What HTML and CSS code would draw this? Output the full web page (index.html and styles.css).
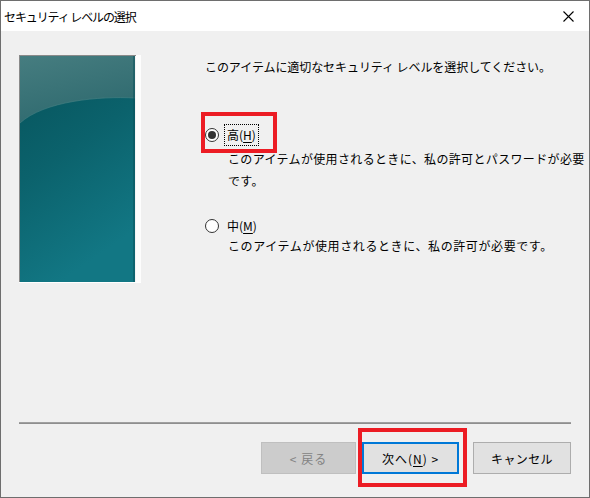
FILE: index.html
```html
<!DOCTYPE html>
<html lang="ja">
<head>
  <meta charset="UTF-8" />
  <title>セキュリティ レベルの選択</title>
  <link rel="stylesheet" href="styles.css">
</head>
<body>
  <div class="window">
    <div class="titlebar">
      <span class="title">セキュリティ レベルの選択</span>
      <svg class="close" width="11" height="11" viewBox="0 0 11 11">
        <path d="M0.5 0.5 L10.5 10.5 M10.5 0.5 L0.5 10.5" stroke="#000" stroke-width="1.1" fill="none"/>
      </svg>
    </div>

    <div class="main">
      <div class="panel">
        <svg width="122" height="228" viewBox="0 0 122 228">
          <defs>
            <linearGradient id="deep" x1="0" y1="0" x2="0.35" y2="1">
              <stop offset="0" stop-color="#06525a"/>
              <stop offset="0.5" stop-color="#0b626c"/>
              <stop offset="1" stop-color="#127784"/>
            </linearGradient>
            <linearGradient id="gloss" x1="0" y1="0" x2="0.4" y2="1">
              <stop offset="0" stop-color="#467d80"/>
              <stop offset="1" stop-color="#2f6a6f"/>
            </linearGradient>
          </defs>
          <rect x="0" y="0" width="122" height="228" fill="#f4f4f4"/>
          <rect x="117" y="0" width="5" height="228" fill="#fdfdfd"/>
          <rect x="1" y="1" width="115" height="226" fill="url(#deep)"/>
          <path d="M1 1 H116 V43 C 80 41 25 46 1 68 Z" fill="url(#gloss)"/>
          <path d="M1 68 C 25 46 80 41 116 43" stroke="#4c8386" stroke-width="1" fill="none" opacity="0.6"/>
          <rect x="114" y="1" width="2" height="226" fill="#0a4f5a" opacity="0.5"/>
          <rect x="0" y="0" width="117" height="1" fill="#8a8a8a"/>
          <rect x="0" y="0" width="1" height="228" fill="#8a8a8a"/>
          <rect x="0" y="227" width="122" height="1" fill="#ffffff"/>
        </svg>
      </div>

      <div class="content">
        <p class="intro">このアイテムに適切なセキュリティ レベルを選択してください。</p>

        <div class="option opt-high">
          <div class="option-row">
            <span class="radio checked"></span>
            <span class="label focused">高(<u>H</u>)</span>
            <span class="mark mark-radio"></span>
          </div>
          <p class="desc">このアイテムが使用されるときに、私の許可とパスワードが必要<br>です。</p>
        </div>

        <div class="option opt-mid">
          <div class="option-row">
            <span class="radio"></span>
            <span class="label">中(<u>M</u>)</span>
          </div>
          <p class="desc">このアイテムが使用されるときに、私の許可が必要です。</p>
        </div>
      </div>
    </div>

    <div class="footer">
      <div class="separator"></div>
      <div class="buttons">
        <button class="btn btn-back" disabled>&lt; 戻る</button>
        <div class="btn-wrap">
          <button class="btn btn-next">次へ(<u>N</u>) &gt;</button>
          <span class="mark mark-next"></span>
        </div>
        <button class="btn btn-cancel">キャンセル</button>
      </div>
    </div>
  </div>
</body>
</html>
```

FILE: styles.css
```css
* {
  box-sizing: border-box;
}

body {
  margin: 0;
  font-family: "Noto Sans CJK JP", "Noto Sans", sans-serif;
  font-size: 12px;
  color: #000;
  background: #f0f0f0;
}

.window {
  width: 590px;
  height: 498px;
  border: 1px solid #6e6e6e;
  background: #f0f0f0;
  display: flex;
  flex-direction: column;
}

.titlebar {
  height: 30px;
  background: #fff;
  display: flex;
  align-items: center;
  justify-content: space-between;
  padding: 0 15px 0 3px;
}

.title {
  font-size: 12px;
  letter-spacing: -1.1px;
}

.close {
  display: block;
}

.main {
  flex: 1;
  display: flex;
  padding: 24px 0 0 18px;
}

.panel {
  width: 122px;
  height: 228px;
  flex-shrink: 0;
}

.panel svg {
  display: block;
}

.content {
  margin-left: 64px;
  padding-top: 3px;
}

.intro {
  margin: 0;
  line-height: 18px;
  letter-spacing: -0.07px;
}

.option-row {
  position: relative;
  display: flex;
  align-items: center;
  height: 22px;
}

.opt-high {
  margin-top: 48px;
}

.opt-mid {
  margin-top: 23px;
}

.radio {
  width: 14px;
  height: 14px;
  margin-left: 0;
  border: 1px solid #333;
  border-radius: 50%;
  background: #fff;
  position: relative;
  flex-shrink: 0;
}

.radio.checked::after {
  content: "";
  position: absolute;
  left: 2px;
  top: 2px;
  width: 8px;
  height: 8px;
  border-radius: 50%;
  background: #333;
}

.label {
  margin-left: 5px;
  padding: 0 2px;
  line-height: 20px;
  border: 1px solid transparent;
}

.label.focused {
  border: 1px dotted #000;
}

.label u,
.btn u {
  text-decoration-thickness: 1px;
  text-underline-offset: 2px;
}

.desc {
  margin: 2px 0 0 23px;
  line-height: 22px;
  letter-spacing: 0.35px;
  white-space: nowrap;
}

.opt-mid .desc {
  margin-top: -1px;
  line-height: 20px;
  letter-spacing: 0.6px;
}

.mark {
  position: absolute;
  border: 4px solid #ec1c24;
  pointer-events: none;
}

.mark-radio {
  left: -4px;
  top: -12px;
  width: 76px;
  height: 41px;
}

.footer {
  padding: 0 18px 23px 18px;
}

.separator {
  height: 2px;
  border-top: 1px solid #a0a0a0;
  border-bottom: 1px solid #8e8e8e;
}

.buttons {
  display: flex;
  justify-content: flex-end;
  margin-top: 18px;
}

.btn {
  height: 32px;
  font-family: inherit;
  font-size: 12px;
  color: #000;
  background: #e1e1e1;
  border: 1px solid #adadad;
  padding: 0;
  letter-spacing: 0.4px;
}

.btn-back {
  width: 95px;
  background: #cccccc;
  border-color: #bfbfbf;
  color: #838383;
  letter-spacing: 1px;
}

.btn-wrap {
  position: relative;
  margin-left: 6px;
}

.btn-next {
  width: 97px;
  border: 2px solid #0078d7;
  display: block;
  letter-spacing: 1px;
}

.mark-next {
  left: -4px;
  top: -14px;
  width: 109px;
  height: 59px;
}

.btn-cancel {
  width: 98px;
  margin-left: 14px;
}
```
